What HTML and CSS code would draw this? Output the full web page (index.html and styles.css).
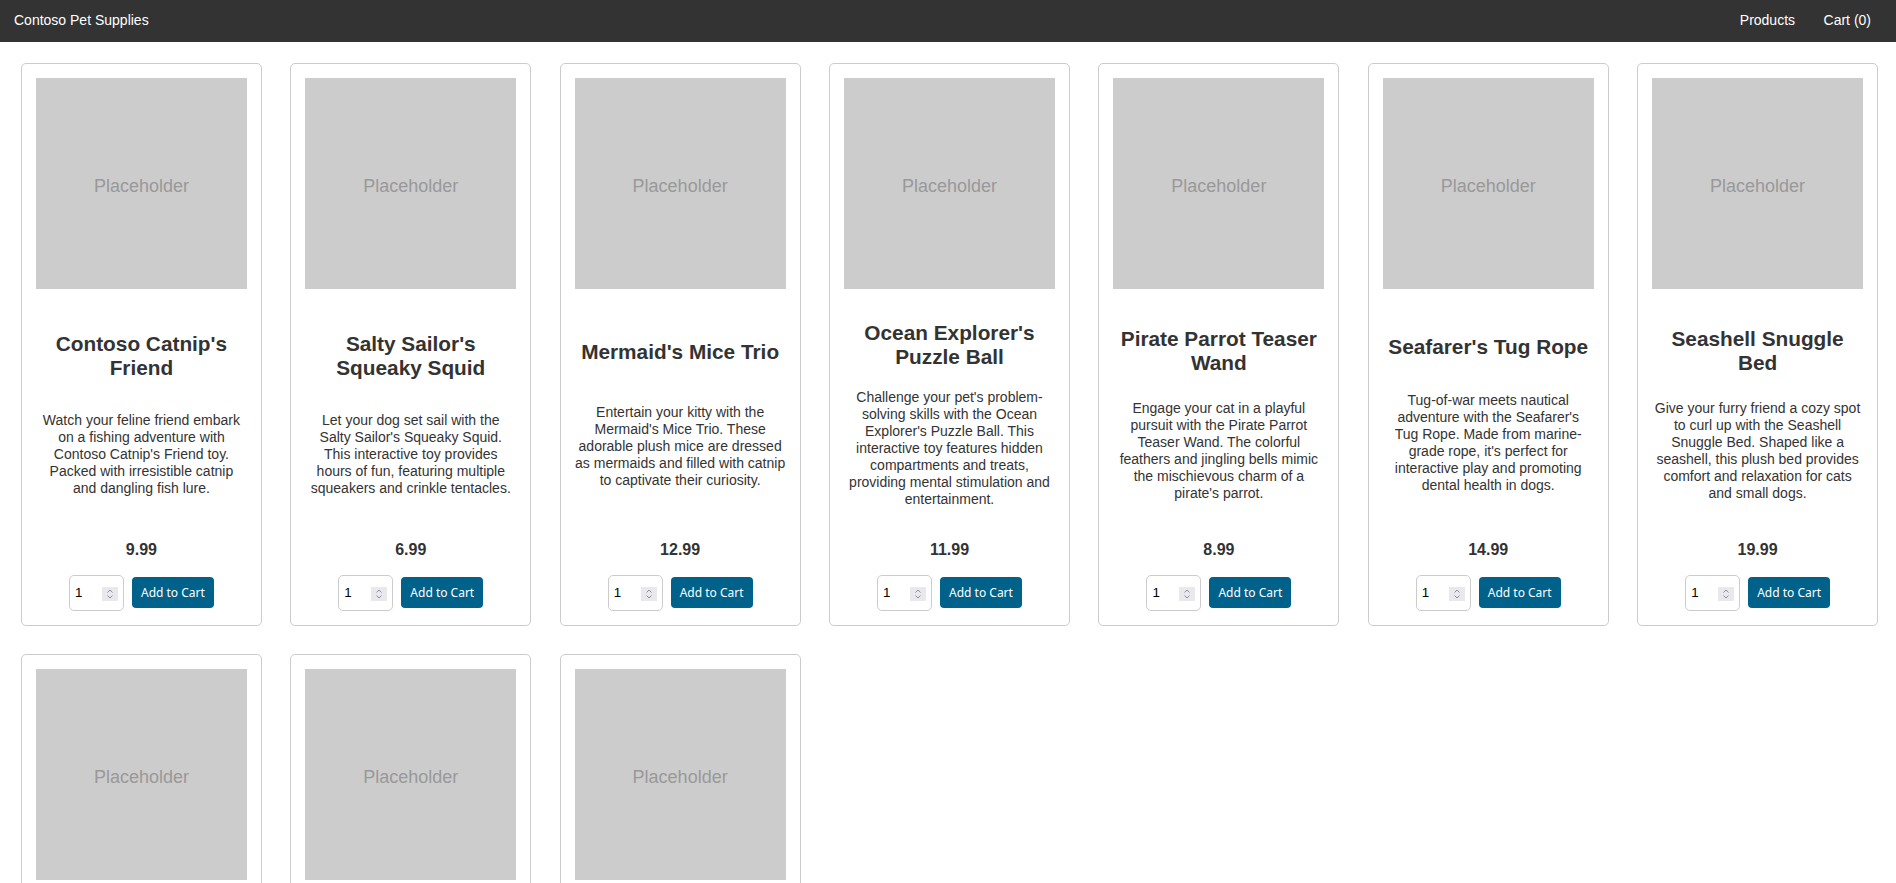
FILE: index.html
```html
<!DOCTYPE html>
<html lang="en">
<head>
<meta charset="utf-8">
<title>Contoso Pet Supplies</title>
<link rel="stylesheet" href="styles.css">
</head>
<body>
<header class="topbar">
  <a class="brand" href="#">Contoso Pet Supplies</a>
  <nav class="nav">
    <a href="#">Products</a>
    <a href="#">Cart (0)</a>
  </nav>
</header>
<main class="grid">
  <article class="card">
    <div class="thumb">Placeholder</div>
    <h3 class="title">Contoso Catnip's Friend</h3>
    <p class="desc">Watch your feline friend embark on a fishing adventure with Contoso Catnip's Friend toy. Packed with irresistible catnip and dangling fish lure.</p>
    <div class="footer">
      <p class="price">9.99</p>
      <div class="actions">
        <label class="qty"><input type="number" value="1" min="1"><span class="spin"><svg width="16" height="14" viewBox="0 0 16 14"><polyline points="5.5,5.5 8,3 10.5,5.5" /><polyline points="5.5,8.5 8,11 10.5,8.5" /></svg></span></label>
        <button class="add" type="button">Add to Cart</button>
      </div>
    </div>
  </article>
  <article class="card">
    <div class="thumb">Placeholder</div>
    <h3 class="title">Salty Sailor's Squeaky Squid</h3>
    <p class="desc">Let your dog set sail with the Salty Sailor's Squeaky Squid. This interactive toy provides hours of fun, featuring multiple squeakers and crinkle tentacles.</p>
    <div class="footer">
      <p class="price">6.99</p>
      <div class="actions">
        <label class="qty"><input type="number" value="1" min="1"><span class="spin"><svg width="16" height="14" viewBox="0 0 16 14"><polyline points="5.5,5.5 8,3 10.5,5.5" /><polyline points="5.5,8.5 8,11 10.5,8.5" /></svg></span></label>
        <button class="add" type="button">Add to Cart</button>
      </div>
    </div>
  </article>
  <article class="card">
    <div class="thumb">Placeholder</div>
    <h3 class="title">Mermaid's Mice Trio</h3>
    <p class="desc">Entertain your kitty with the Mermaid's Mice Trio. These adorable plush mice are dressed as mermaids and filled with catnip to captivate their curiosity.</p>
    <div class="footer">
      <p class="price">12.99</p>
      <div class="actions">
        <label class="qty"><input type="number" value="1" min="1"><span class="spin"><svg width="16" height="14" viewBox="0 0 16 14"><polyline points="5.5,5.5 8,3 10.5,5.5" /><polyline points="5.5,8.5 8,11 10.5,8.5" /></svg></span></label>
        <button class="add" type="button">Add to Cart</button>
      </div>
    </div>
  </article>
  <article class="card">
    <div class="thumb">Placeholder</div>
    <h3 class="title">Ocean Explorer's Puzzle Ball</h3>
    <p class="desc">Challenge your pet's problem-solving skills with the Ocean Explorer's Puzzle Ball. This interactive toy features hidden compartments and treats, providing mental stimulation and entertainment.</p>
    <div class="footer">
      <p class="price">11.99</p>
      <div class="actions">
        <label class="qty"><input type="number" value="1" min="1"><span class="spin"><svg width="16" height="14" viewBox="0 0 16 14"><polyline points="5.5,5.5 8,3 10.5,5.5" /><polyline points="5.5,8.5 8,11 10.5,8.5" /></svg></span></label>
        <button class="add" type="button">Add to Cart</button>
      </div>
    </div>
  </article>
  <article class="card">
    <div class="thumb">Placeholder</div>
    <h3 class="title">Pirate Parrot Teaser Wand</h3>
    <p class="desc">Engage your cat in a playful pursuit with the Pirate Parrot Teaser Wand. The colorful feathers and jingling bells mimic the mischievous charm of a pirate's parrot.</p>
    <div class="footer">
      <p class="price">8.99</p>
      <div class="actions">
        <label class="qty"><input type="number" value="1" min="1"><span class="spin"><svg width="16" height="14" viewBox="0 0 16 14"><polyline points="5.5,5.5 8,3 10.5,5.5" /><polyline points="5.5,8.5 8,11 10.5,8.5" /></svg></span></label>
        <button class="add" type="button">Add to Cart</button>
      </div>
    </div>
  </article>
  <article class="card">
    <div class="thumb">Placeholder</div>
    <h3 class="title">Seafarer's Tug Rope</h3>
    <p class="desc">Tug-of-war meets nautical adventure with the Seafarer's<br>Tug Rope. Made from marine-grade rope, it's perfect for interactive play and promoting dental health in dogs.</p>
    <div class="footer">
      <p class="price">14.99</p>
      <div class="actions">
        <label class="qty"><input type="number" value="1" min="1"><span class="spin"><svg width="16" height="14" viewBox="0 0 16 14"><polyline points="5.5,5.5 8,3 10.5,5.5" /><polyline points="5.5,8.5 8,11 10.5,8.5" /></svg></span></label>
        <button class="add" type="button">Add to Cart</button>
      </div>
    </div>
  </article>
  <article class="card">
    <div class="thumb">Placeholder</div>
    <h3 class="title">Seashell Snuggle Bed</h3>
    <p class="desc">Give your furry friend a cozy spot to curl up with the Seashell Snuggle Bed. Shaped like a seashell, this plush bed provides comfort and relaxation for cats and small dogs.</p>
    <div class="footer">
      <p class="price">19.99</p>
      <div class="actions">
        <label class="qty"><input type="number" value="1" min="1"><span class="spin"><svg width="16" height="14" viewBox="0 0 16 14"><polyline points="5.5,5.5 8,3 10.5,5.5" /><polyline points="5.5,8.5 8,11 10.5,8.5" /></svg></span></label>
        <button class="add" type="button">Add to Cart</button>
      </div>
    </div>
  </article>
  <article class="card">
    <div class="thumb">Placeholder</div>
    <h3 class="title">Captain's Cozy Hammock</h3>
    <p class="desc">Let your cat lounge like a ship's captain in this sturdy hammock, perfect for naps with a view of the high seas.</p>
    <div class="footer">
      <p class="price">24.99</p>
      <div class="actions">
        <label class="qty"><input type="number" value="1" min="1"><span class="spin"><svg width="16" height="14" viewBox="0 0 16 14"><polyline points="5.5,5.5 8,3 10.5,5.5" /><polyline points="5.5,8.5 8,11 10.5,8.5" /></svg></span></label>
        <button class="add" type="button">Add to Cart</button>
      </div>
    </div>
  </article>
  <article class="card">
    <div class="thumb">Placeholder</div>
    <h3 class="title">Lighthouse Laser Pointer</h3>
    <p class="desc">Guide your cat through an exciting chase with the Lighthouse Laser Pointer, a bright beam for endless playtime.</p>
    <div class="footer">
      <p class="price">7.99</p>
      <div class="actions">
        <label class="qty"><input type="number" value="1" min="1"><span class="spin"><svg width="16" height="14" viewBox="0 0 16 14"><polyline points="5.5,5.5 8,3 10.5,5.5" /><polyline points="5.5,8.5 8,11 10.5,8.5" /></svg></span></label>
        <button class="add" type="button">Add to Cart</button>
      </div>
    </div>
  </article>
  <article class="card">
    <div class="thumb">Placeholder</div>
    <h3 class="title">Anchor Chew Toy</h3>
    <p class="desc">A durable anchor-shaped chew toy that keeps your dog busy and helps clean teeth during every voyage.</p>
    <div class="footer">
      <p class="price">5.99</p>
      <div class="actions">
        <label class="qty"><input type="number" value="1" min="1"><span class="spin"><svg width="16" height="14" viewBox="0 0 16 14"><polyline points="5.5,5.5 8,3 10.5,5.5" /><polyline points="5.5,8.5 8,11 10.5,8.5" /></svg></span></label>
        <button class="add" type="button">Add to Cart</button>
      </div>
    </div>
  </article>
</main>
</body>
</html>
```

FILE: styles.css
```css
* {
  box-sizing: border-box;
}

html, body {
  margin: 0;
  padding: 0;
  background: #fff;
}

body {
  font-family: "Liberation Sans", Arial, sans-serif;
  color: #333;
}

.topbar {
  display: flex;
  justify-content: space-between;
  align-items: flex-start;
  height: 42px;
  padding: 11.5px 25px 0 14px;
  background: #333;
}

.topbar a {
  color: #fff;
  text-decoration: none;
  font-size: 14px;
  line-height: 16px;
}

.nav {
  display: flex;
  gap: 28.5px;
}

.grid {
  display: grid;
  grid-template-columns: repeat(auto-fill, minmax(240px, 1fr));
  column-gap: 28.5px;
  row-gap: 28px;
  padding: 21px 18px 21px 21px;
}

.card {
  display: flex;
  flex-direction: column;
  justify-content: space-between;
  border: 1px solid #ccc;
  border-radius: 5px;
  padding: 14px;
  text-align: center;
  background: #fff;
}

.thumb {
  display: flex;
  align-items: center;
  justify-content: center;
  aspect-ratio: 1 / 1;
  padding-top: 6px;
  background: #ccc;
  color: #999;
  font-size: 18px;
}

.title {
  margin: 32px 0 20px;
  font-size: 20.8px;
  font-weight: bold;
  line-height: normal;
  color: #333;
}

.desc {
  margin: 0;
  font-size: 14px;
  line-height: 17px;
  color: #333;
}

.footer {
  margin-top: 33px;
}

.price {
  margin: 0 0 16px;
  font-size: 16px;
  font-weight: bold;
  line-height: normal;
  color: #333;
}

.actions {
  display: flex;
  justify-content: center;
  align-items: center;
  gap: 8px;
}

.qty {
  display: flex;
  align-items: center;
  width: 55px;
  height: 36px;
  padding: 0 5px 0 5px;
  border: 1px solid #ccc;
  border-radius: 5px;
  background: #fff;
}

.qty input {
  flex: 1;
  min-width: 0;
  height: 100%;
  padding: 0;
  border: 0;
  outline: 0;
  background: transparent;
  font-family: "Liberation Sans", Arial, sans-serif;
  font-size: 13.33px;
  color: #000;
  -moz-appearance: textfield;
  appearance: textfield;
}

.qty input::-webkit-inner-spin-button,
.qty input::-webkit-outer-spin-button {
  -webkit-appearance: none;
  margin: 0;
}

.spin {
  display: flex;
  width: 16px;
  height: 14px;
  margin-top: 2px;
  background: #e9e9ed;
}

.spin svg {
  display: block;
}

.spin polyline {
  fill: none;
  stroke: #8f8f9d;
  stroke-width: 1;
}

.add {
  height: 31px;
  padding: 0 9px;
  border: 0;
  border-radius: 4px;
  background: #00618b;
  color: #fff;
  font-family: "Noto Sans", "Open Sans", sans-serif;
  font-size: 12px;
  cursor: pointer;
}
```
